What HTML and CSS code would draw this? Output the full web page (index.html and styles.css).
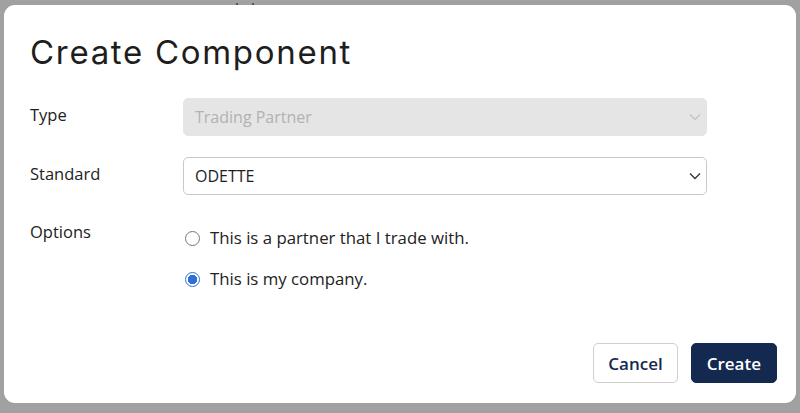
FILE: index.html
```html
<!DOCTYPE html>
<html>
<head>
<meta charset="utf-8">
<link rel="stylesheet" href="styles.css">
</head>
<body>
<div class="backdrop">
  <span class="bg-mark m1"></span><span class="bg-mark m2"></span>
  <div class="modal">
    <h1 class="title">Create Component</h1>
    <div class="form">
      <div class="label">Type</div>
      <div class="select disabled">
        <span>Trading Partner</span>
        <svg class="chev" width="12" height="8" viewBox="0 0 12 8"><path d="M1 1.5 L6 6.5 L11 1.5" fill="none" stroke="currentColor" stroke-width="1.3"/></svg>
      </div>
      <div class="label">Standard</div>
      <div class="select">
        <span>ODETTE</span>
        <svg class="chev" width="12" height="8" viewBox="0 0 12 8"><path d="M1 1.5 L6 6.5 L11 1.5" fill="none" stroke="currentColor" stroke-width="1.3"/></svg>
      </div>
      <div class="label label-opt">Options</div>
      <div class="options">
        <label class="opt"><span class="radio"></span>This is a partner that I trade with.</label>
        <label class="opt"><span class="radio checked"></span>This is my company.</label>
      </div>
    </div>
    <div class="footer">
      <button class="btn btn-cancel">Cancel</button>
      <button class="btn btn-create">Create</button>
    </div>
  </div>
</div>
</body>
</html>
```
FILE: styles.css
```css
html, body {
  margin: 0;
  padding: 0;
  background: #a1a1a1;
  font-family: "Open Sans", "Noto Sans", sans-serif;
  color: #222;
}
.backdrop {
  position: relative;
  height: 413px;
  padding: 5px 4px 0 4px;
  box-sizing: border-box;
}
.bg-mark {
  position: absolute;
  top: 3px;
  width: 2px;
  height: 3px;
  background: #555;
}
.m1 { left: 236px; }
.m2 { left: 252px; }
.modal {
  position: relative;
  background: #fff;
  border-radius: 11px;
  height: 398px;
  box-sizing: border-box;
  padding: 27px 19px 0 26px;
  display: flex;
  flex-direction: column;
}
.title {
  margin: 0;
  font-family: "Inter", sans-serif;
  font-weight: 400;
  font-size: 33px;
  line-height: 40px;
  color: #1e1e1e;
  letter-spacing: 1.7px;
}
.form {
  margin-top: 26px;
  margin-right: 70px;
  display: grid;
  grid-template-columns: 153px 1fr;
  row-gap: 21px;
  align-items: center;
}
.label {
  font-size: 16.5px;
  color: #222;
  margin-top: -5px;
}
.label-opt {
  align-self: start;
  margin-top: 4px;
}
.select {
  height: 38px;
  border: 1px solid #c9c9c9;
  border-radius: 5px;
  box-sizing: border-box;
  display: flex;
  align-items: center;
  justify-content: space-between;
  padding: 0 5px 0 11px;
  font-size: 16px;
  color: #1e1e1e;
}
.select.disabled {
  background: #e5e5e5;
  border-color: #e5e5e5;
  color: #b2b2b2;
}
.chev { color: #333; }
.select.disabled .chev { color: #c4c4c4; }
.options {
  display: flex;
  flex-direction: column;
  gap: 19px;
  padding-top: 11px;
}
.opt {
  display: flex;
  align-items: center;
  gap: 10px;
  font-size: 16.8px;
  color: #222;
  line-height: 22px;
  padding-left: 2px;
}
.radio {
  width: 15px;
  height: 15px;
  border: 1px solid #777;
  border-radius: 50%;
  box-sizing: border-box;
  display: inline-block;
  flex: none;
}
.radio.checked {
  border: 1.5px solid #2f6fd6;
  background: radial-gradient(circle, #2f6fd6 0 4.5px, #fff 5px);
}
.footer {
  margin-top: auto;
  margin-bottom: 20px;
  display: flex;
  justify-content: flex-end;
  gap: 13px;
}
.btn {
  font-family: "Open Sans", "Noto Sans", sans-serif;
  font-weight: 600;
  font-size: 17px;
  height: 40px;
  border-radius: 5px;
  box-sizing: border-box;
  padding: 0 14px;
  cursor: pointer;
}
.btn-cancel {
  background: #fff;
  border: 1px solid #cfcfcf;
  color: #14294f;
}
.btn-create {
  background: #14294f;
  border: 1px solid #14294f;
  color: #fff;
  padding: 0 15px;
}
```
